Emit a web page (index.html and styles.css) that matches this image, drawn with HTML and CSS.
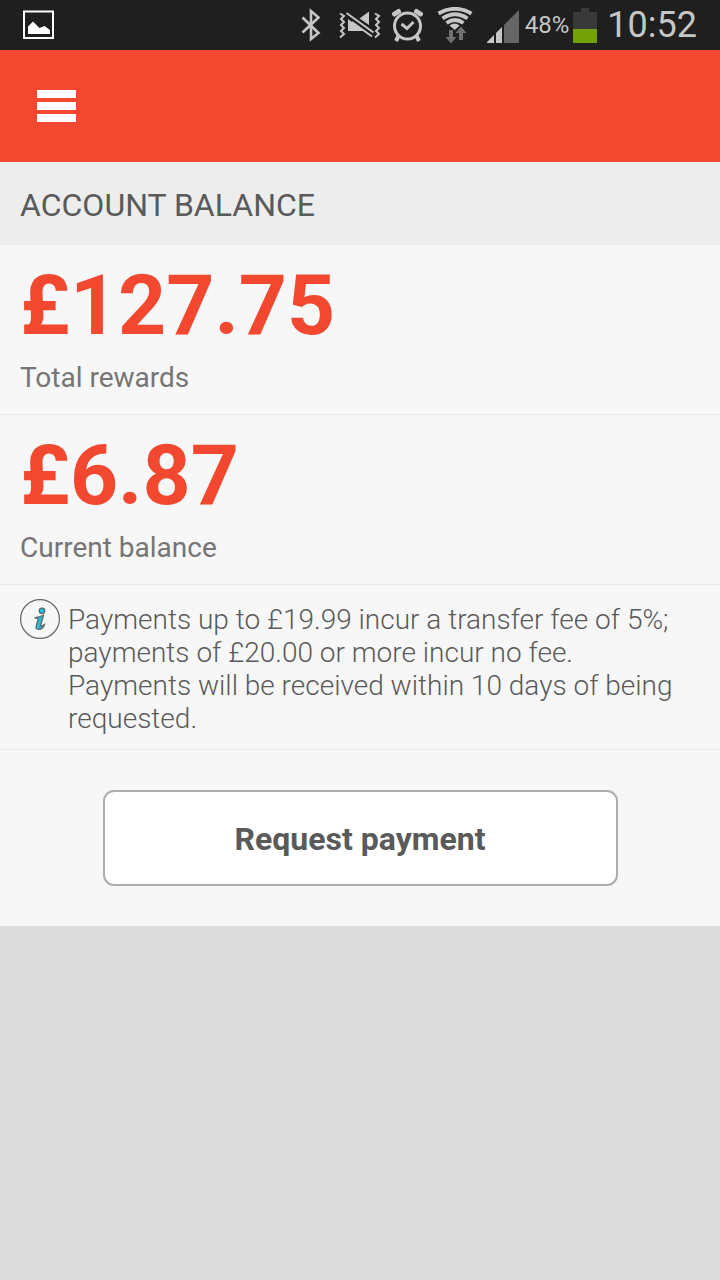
FILE: index.html
```html
<!DOCTYPE html>
<html lang="en">
<head>
<meta charset="utf-8">
<meta name="viewport" content="width=device-width, initial-scale=1">
<title>Account balance</title>
<link rel="stylesheet" href="styles.css">
</head>
<body>
<div class="status-bar">
  <svg class="picture-icon" width="32" height="30" viewBox="23 10 32 30" aria-hidden="true">
    <path fill="none" stroke="#fff" stroke-width="2" d="M24 11.500h29V38H24z"/>
    <path fill="#fff" d="M28 34v-7.500l5-5 6.500 6.500 5-2 5.500 4v4z"/>
  </svg>
  <div class="status-icons">
    <svg width="28" height="36" viewBox="301 7 28 36" aria-hidden="true">
      <path fill="none" stroke="#c6c6c6" stroke-width="2.600" d="M302.500 17.500l16 15.500-7.500 6V11l7.500 6.500-16 15"/>
    </svg>
    <svg width="42" height="36" viewBox="339 7 42 36" aria-hidden="true">
      <g fill="none" stroke="#c6c6c6" stroke-width="2">
        <path d="M340 13.500l4 2.500-3 3 3 3-3 3 3 3-3 3 3 3-4 3.500"/>
        <path d="M375 13.500l4 2.500-3 3 3 3-3 3 3 3-3 3 3 3-4 3.500"/>
        <path d="M346.500 13l27 19.500M352 22l20 14.500"/>
      </g>
      <path fill="#c6c6c6" d="M348 19l16 12H348zM359.500 18.500l9.500-7V25z"/>
    </svg>
    <svg width="36" height="36" viewBox="391 7 36 36" aria-hidden="true">
      <g fill="none" stroke="#c6c6c6">
        <circle cx="407.500" cy="26" r="13" stroke-width="3"/>
        <path stroke-width="3" d="M401.500 24l5.500 4.500 6.500-6.500"/>
        <path stroke-width="5" stroke-linecap="round" d="M394.500 14l4-2.500M416.500 11.500l4 2.500"/>
        <path stroke-width="4" d="M399 35l-3 6M416 35l3 6"/>
      </g>
    </svg>
    <svg width="40" height="36" viewBox="437 7 40 36" aria-hidden="true">
      <g fill="none" stroke="#c6c6c6" stroke-width="3.800">
        <path d="M438.500 13.500Q455 4 471.500 13.500"/>
        <path d="M442.500 18.500Q455 10 467.500 18.500"/>
        <path d="M446.500 23Q455 17 463.500 23"/>
      </g>
      <path fill="#c6c6c6" d="M449.500 25.500q5.500-4 10 0l-4.700 4.500z"/>
      <path fill="#707070" d="M449 30h4v7h3.500l-5.500 6.500-5.500-6.500h3.500zM459 40v-7h-3.500l5.500-6.500 5.500 6.500H463v7z"/>
    </svg>
    <svg width="33" height="36" viewBox="487 7 33 36" aria-hidden="true">
      <path fill="#c6c6c6" d="M486 43l8-8v8zM496 33l6-6v16h-6z"/>
      <path fill="#666" d="M504 25l15-15v33h-15z"/>
    </svg>
    <span class="battery-text">48%</span>
    <svg width="24" height="36" viewBox="573 7 24 36" aria-hidden="true">
      <path fill="#393939" d="M573 12h8V8h8v4h8v31h-24z"/>
      <path fill="#759f07" d="M573 29h24v14h-24z"/>
    </svg>
    <time class="clock">10:52</time>
  </div>
</div>
<header class="app-bar">
  <button class="menu-button" type="button" aria-label="Menu">
    <span class="menu-line"></span>
    <span class="menu-line"></span>
    <span class="menu-line"></span>
  </button>
</header>
<main class="account">
  <h1 class="title">ACCOUNT BALANCE</h1>
  <section class="balance">
    <p class="amount">£127.75</p>
    <p class="label">Total rewards</p>
  </section>
  <section class="balance">
    <p class="amount">£6.87</p>
    <p class="label">Current balance</p>
  </section>
  <section class="notice">
    <svg class="info-icon" width="40" height="40" viewBox="0 0 40 40" aria-hidden="true">
      <circle cx="20" cy="20" r="19.400" fill="none" stroke="#666" stroke-width="1.200"/>
      <g fill="#20bedb" stroke="#626262" stroke-width="1.200">
        <circle cx="22" cy="11.800" r="2.800"/>
        <path d="M15.200 18.500q4-.5 8.300-2.300l-3 10.800q1.500.5 4-1.500-1.500 4.800-6 4.800-3.500 0-2.300-3.300l2-7q-1.500-1-3-1z"/>
      </g>
    </svg>
    <p class="notice-text">Payments up to £19.99 incur a transfer fee of 5%; payments of £20.00 or more incur no fee. Payments will be received within 10 days of being requested.</p>
  </section>
  <div class="actions">
    <button class="request-button" type="button">Request payment</button>
  </div>
</main>
</body>
</html>
```
FILE: styles.css
```css
* {
  box-sizing: border-box;
}

body {
  margin: 0;
  min-height: 100vh;
  background: #dcdcdc;
  color: #5a5a5a;
  font-family: Roboto, "Noto Sans", sans-serif;
}

h1,
p {
  margin: 0;
}

svg {
  display: block;
  flex: none;
}

.status-bar {
  display: flex;
  justify-content: space-between;
  align-items: center;
  height: 50px;
  padding: 0 23px;
  background: #1f1f1f;
  color: #c6c6c6;
}

.status-icons {
  display: flex;
  align-items: center;
  gap: 10px;
}

.battery-text {
  margin: 0 -6px 0 -5px;
  font-size: 24px;
  line-height: 32px;
}

.clock {
  font-size: 36px;
  line-height: 48px;
}

.app-bar {
  display: flex;
  align-items: center;
  height: 112px;
  padding: 0 37px;
  background: #f1482f;
}

.menu-button {
  display: flex;
  flex-direction: column;
  gap: 4px;
  padding: 0;
  border: 0;
  background: none;
  cursor: pointer;
}

.menu-line {
  width: 39px;
  height: 8px;
  background: #fff;
}

.account {
  background: #f7f7f7;
}

.title {
  padding: 23px 20px 20px;
  background: #ededed;
  font-size: 32px;
  font-weight: 400;
  line-height: 40px;
}

.balance {
  padding: 21px 20px 18px;
  border-bottom: 1px solid #e9e9e9;
}

.amount {
  color: #f1482f;
  font-size: 84px;
  font-weight: 700;
  line-height: 80px;
}

.label {
  margin-top: 14px;
  color: #757575;
  font-size: 28px;
  line-height: 36px;
}

.notice {
  display: flex;
  gap: 8px;
  padding: 14px 20px;
  border-bottom: 1px solid #e9e9e9;
}

.notice-text {
  padding-top: 4px;
  font-size: 28px;
  font-weight: 300;
  line-height: 33px;
}

.actions {
  display: flex;
  justify-content: center;
  padding: 40px 20px;
}

.request-button {
  width: 100%;
  max-width: 515px;
  padding: 27px 20px 25px;
  border: 2px solid #adadad;
  border-radius: 11px;
  background: #fff;
  color: #5a5a5a;
  font-family: inherit;
  font-size: 32px;
  font-weight: 700;
  line-height: 40px;
  cursor: pointer;
}
```
